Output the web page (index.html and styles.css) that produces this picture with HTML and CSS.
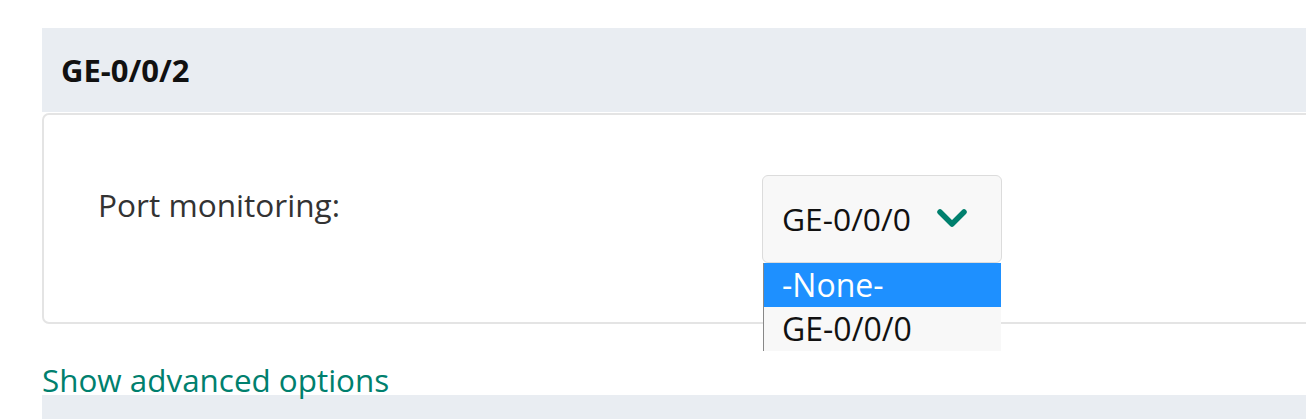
FILE: index.html
```html
<!DOCTYPE html>
<html>
<head>
<meta charset="utf-8">
<link rel="stylesheet" href="styles.css">
</head>
<body>
<div class="page">
  <section class="panel">
    <div class="panel-head">GE-0/0/2</div>
    <div class="panel-body">
      <div class="field">
        <label class="field-label">Port monitoring:</label>
        <div class="select-wrap">
          <div class="select">
            <span class="select-value">GE-0/0/0</span>
            <svg class="chev" width="32" height="22" viewBox="0 0 32 22"><path d="M4 4 L16 16 L28 4" fill="none" stroke="#00806e" stroke-width="5.5" stroke-linecap="round" stroke-linejoin="round"/></svg>
          </div>
          <ul class="options">
            <li class="opt opt-active">-None-</li>
            <li class="opt">GE-0/0/0</li>
          </ul>
        </div>
      </div>
    </div>
  </section>
  <a class="adv-link" href="#">Show advanced options</a>
  <div class="next-head"></div>
</div>
</body>
</html>
```

FILE: styles.css
```css
html, body {
  margin: 0;
  padding: 0;
  background: #ffffff;
  overflow: hidden;
}
body {
  width: 1306px;
  height: 419px;
  font-family: "Open Sans", "Noto Sans", sans-serif;
}
.page {
  padding: 28px 0 0 42px;
  width: 1400px;
}
.panel-head {
  height: 84px;
  background: #e9edf2;
  display: flex;
  align-items: center;
  padding-left: 19px;
  font-weight: 700;
  font-size: 31px;
  color: #111;
}
.panel-body {
  margin-top: 1px;
  border: 2px solid #e4e4e4;
  border-radius: 7px;
  box-sizing: border-box;
  height: 211px;
}
.field {
  display: flex;
  align-items: flex-start;
  padding: 60px 0 0 54px;
}
.field-label {
  width: 664px;
  font-size: 31.6px;
  color: #333;
  line-height: 44px;
  padding-top: 8px;
}
.select-wrap {
  position: relative;
}
.select {
  width: 240px;
  height: 88px;
  box-sizing: border-box;
  border: 1px solid #dcdcdc;
  border-radius: 6px;
  background: #f8f8f8;
  display: flex;
  align-items: center;
  padding-left: 19px;
  gap: 25px;
}
.select-value {
  font-size: 31.8px;
  color: #111;
  padding-bottom: 2px;
}
.chev {
  display: block;
  margin-top: 0;
}
.options {
  position: absolute;
  top: 88px;
  left: 1px;
  width: 238px;
  height: 88px;
  margin: 0;
  padding: 0;
  list-style: none;
  overflow: hidden;
  background: #f8f8f8;
  border-left: 1px solid #888;
  box-sizing: border-box;
}
.opt {
  height: 44px;
  line-height: 44px;
  padding-left: 18px;
  font-size: 32px;
  color: #111;
}
.opt-active {
  background: #1e90ff;
  color: #fff;
}
.adv-link {
  display: block;
  margin-top: 41px;
  font-size: 31.4px;
  line-height: 30px;
  color: #00806e;
  text-decoration: none;
}
.next-head {
  height: 60px;
  background: #e9edf2;
}
```
